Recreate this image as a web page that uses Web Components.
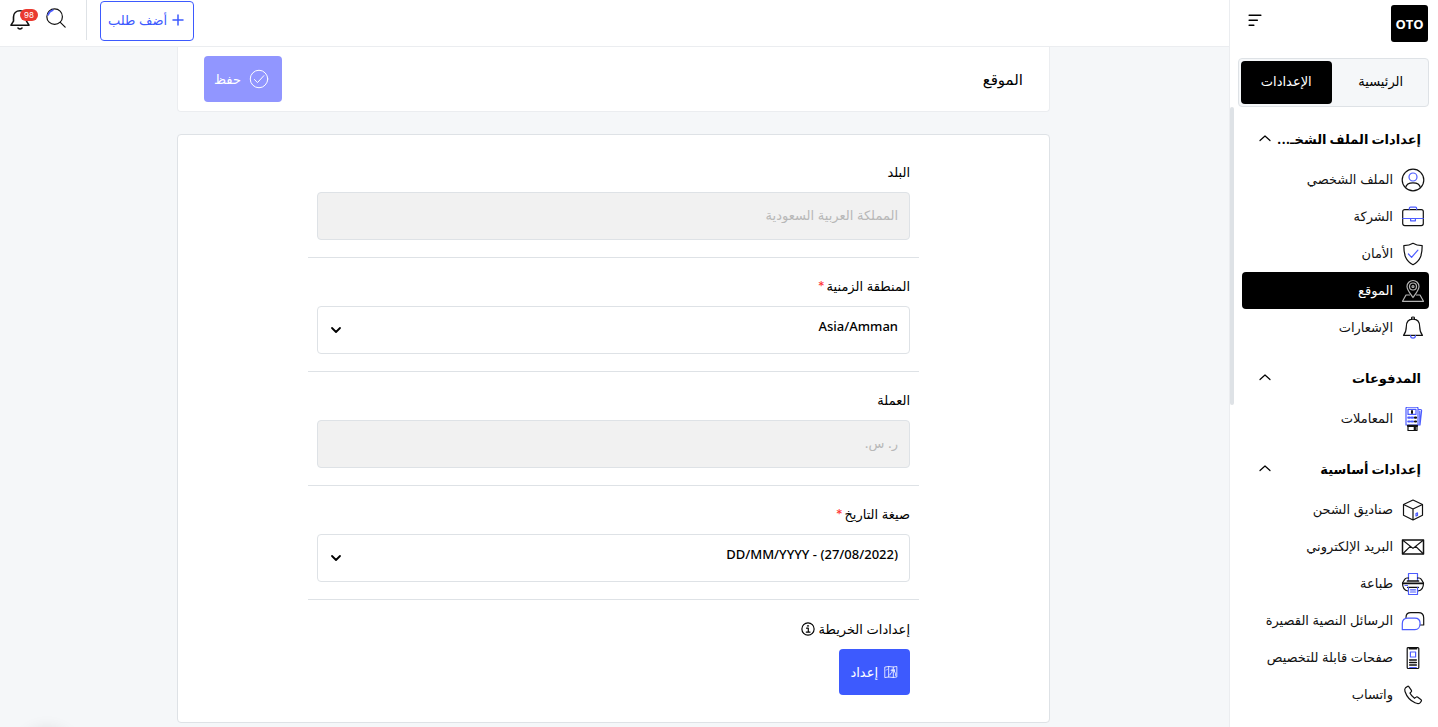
<!DOCTYPE html>
<html lang="ar" dir="rtl">
<head>
<meta charset="utf-8">
<meta name="viewport" content="width=device-width, initial-scale=1">
<title>الموقع</title>
<style>
    body {
        margin: 0;
        background: #f5f7f9;
        color: #000;
        font-family: Inter, "Noto Sans", "DejaVu Sans", sans-serif;
        font-size: 13px;
        --blue: #3d5afe;
        --line: #dee2e6;
    }
</style>
</head>
<body>
<app-shell>
    <side-bar slot="sidebar">
        <nav-group heading="إعدادات الملف الشخـ...">
            <nav-item icon="user">الملف الشخصي</nav-item>
            <nav-item icon="briefcase">الشركة</nav-item>
            <nav-item icon="shield">الأمان</nav-item>
            <nav-item icon="location" active>الموقع</nav-item>
            <nav-item icon="bell">الإشعارات</nav-item>
        </nav-group>
        <nav-group heading="المدفوعات">
            <nav-item icon="terminal">المعاملات</nav-item>
        </nav-group>
        <nav-group heading="إعدادات أساسية">
            <nav-item icon="box">صناديق الشحن</nav-item>
            <nav-item icon="mail">البريد الإلكتروني</nav-item>
            <nav-item icon="printer">طباعة</nav-item>
            <nav-item icon="chat">الرسائل النصية القصيرة</nav-item>
            <nav-item icon="phone">صفحات قابلة للتخصيص</nav-item>
            <nav-item icon="call">واتساب</nav-item>
        </nav-group>
    </side-bar>
    <top-bar slot="topbar" count="98"></top-bar>
    <page-title>الموقع</page-title>
    <settings-panel>
        <form-field value="المملكة العربية السعودية" disabled>البلد</form-field>
        <form-field type="select" value="Asia/Amman" required>المنطقة الزمنية</form-field>
        <form-field value="ر. س." disabled>العملة</form-field>
        <form-field type="select" value="DD/MM/YYYY - (27/08/2022)" required>صيغة التاريخ</form-field>
        <map-settings>إعدادات الخريطة</map-settings>
    </settings-panel>
</app-shell>
<chat-shadow></chat-shadow>

<script>
const ICONS = {
    user: `<circle cx="12" cy="12" r="10.8"/><circle class="b" cx="12" cy="9" r="4"/><path d="M4.6 19.7c.6-3.200 3.400-4.900 7.400-4.900s6.800 1.700 7.400 4.900"/>`,
    briefcase: `<rect x="1.700" y="4.600" width="20.600" height="16" rx="2"/><path class="b" d="M8.300 4.600V3.400q0-1.200 1.200-1.200h5q1.200 0 1.200 1.200v1.200M1.700 13.500h20.600M9.600 13.500v2.300h4.800v-2.300"/>`,
    shield: `<path d="M12 1.300c2.700 1.800 5.700 2.300 9.200 2.300 0 8.900-1.500 14.900-9.200 19.100C4.300 18.500 2.800 12.500 2.800 3.600c3.500 0 6.500-.5 9.200-2.300z"/><path class="b" d="M7.400 12l3.200 3.300 6.300-7.200"/>`,
    location: `<path d="M12 18.500C8.400 13.500 6 10.800 6 7.500a6 6 0 0 1 12 0c0 3.300-2.400 6-6 11z"/><circle cx="12" cy="7.500" r="3.500"/><circle cx="12" cy="7.500" r="1"/><path d="M8.500 16H5l-3.500 6.300h21L19 16h-3.500"/>`,
    bell: `<path d="M10.600 3.200V1.800q0-.8 1.400-.8t1.400.8v1.400M2.500 19.300h19c-2-2.400-2.800-4-2.800-8.500C18.700 6.300 16.400 3.200 12 3.200s-6.700 3.100-6.700 7.600c0 4.500-.8 6.100-2.800 8.500z"/><path class="b" d="M9.500 19.500c.2 3.500 4.800 3.500 5 0"/>`,
    terminal: `<g class="b"><path d="M5 18V1.500q0-1.300 1.300-1.300h9.400q1.300 0 1.300 1.300V18zM17 2.500h2.300q1.400 0 1.300 1.300L19 18h-2M18.800 4v13"/><rect x="7" y="2.400" width="8" height="5"/><path d="M7.300 10.700h1.500M10.500 10.700H12M7.300 14.500h1.500M10.500 14.500H12" stroke-width="2.200"/></g><path d="M11 4v2" stroke-width="2"/><path d="M14 10.700h1M14 14.500h1" stroke-width="2.200"/><path d="M7 18.500v5h9v-5z"/><path d="M7 18.800h9M13.800 19v4.500" stroke-width="2.200"/>`,
    box: `<path d="M12 2l9.500 4.500v10.800L12 22l-9.500-4.700V6.500zM2.500 6.500L12 11l9.500-4.500M12 11v11"/><path class="b" d="M15 15.500v2.500l1.500-.6v-2.500z"/>`,
    mail: `<rect x="1.500" y="5" width="21" height="14" stroke-width="1.500"/><path d="M1.800 5.300l10.200 8.100L22.200 5.300M1.800 18.700l7.500-7.300M22.200 18.700l-7.500-7.300"/>`,
    printer: `<path class="b" d="M7.500 8.500V1.500h9v7"/><path d="M7.500 6H6q-1.500 0-2.300 1.400L1.500 11c0 3.500 1.500 7.500 5.500 8M16.500 6H18q1.500 0 2.300 1.400l2.200 3.600c0 3.500-1.500 7.500-5.500 8"/><path d="M6.500 9h11M1.800 11.300h20.400" stroke-width="1.700"/><path d="M6.500 15.300h11"/><path class="b" d="M4 13.500h2.500M7.500 15.500v7h9v-7M9.500 17.800h5M9.500 20h5"/>`,
    chat: `<path d="M5 8.500C5 5.600 6.800 3.700 9.800 3.700h7.700c3.400 0 5.200 2.200 5.200 5.300V16h-3.500"/><path class="b" d="M1.300 20.700v-6c0-3.500 2.300-5.500 5.600-5.500h7c3.200 0 5.200 2.200 5.200 5.300 0 3.500-2 6.200-5.200 6.200z"/>`,
    phone: `<rect x="6.200" y="1.500" width="11.600" height="21" rx="1"/><path d="M8.500 2.500h7" stroke-width="2"/><rect class="b" x="9.400" y="6" width="5.200" height="5"/><path d="M8.700 14h6.600M8.700 16.500h6.600M8.700 19h6.600" stroke-width="1.500"/><path class="b" d="M8.700 21.500h6.600"/>`,
    call: `<path d="M4.600 4.700l1.800-1.300q.8-.5 1.400.2l2.600 3.700q.5.900-.2 1.500L8.900 10.100c1 2 2.600 3.700 4.600 5.200l1.500-1.200q.7-.6 1.500 0l3.600 2.700q.8.700.1 1.500l-1.200 1.500c-1.200 1.200-3 .9-5 0C8.900 17.500 5.600 13.200 4 8.500c-.5-1.500-.4-2.800.6-3.800z"/>`,
    search: `<circle cx="10.500" cy="10.500" r="8.500"/><path d="M16.700 16.700l5.300 5.300"/><path class="b" d="M3.500 8.500C4.300 6 6 4.300 8.500 3.500" stroke-width="1.800"/>`,
    alarm: `<path d="M3 18.200h18l-2.500-4V10c0-3.600-2.600-6.300-6.500-6.300S5.500 6.400 5.500 10v4.200z"/><path d="M10 21q2 2 4 0"/>`,
    check: `<circle cx="12" cy="12" r="10.500"/><path d="M6.500 12.600l3.700 3.700L17.800 8"/>`,
    plus: `<path d="M12 2v20M2 12h20"/>`,
    up: `<path d="M2 15l10-9 10 9"/>`,
    down: `<path d="M4 8l8 8 8-8"/>`,
    menu: `<path d="M2 4h20M2 12.500h14M2 21h8"/>`,
    info: `<circle cx="12" cy="12" r="10.500"/><path d="M9.500 10.500h3v6.500M9 17.300h6.500"/><path d="M11 6.700h2" />`,
    map: `<path d="M2 3.500l6-1 8 1 6-1v18l-6 1-8-1-6 1zM8 2.500v18M16 3.500v18M4 9l2-2M10 17c0-4 4-2 4-6V7M12 9h4M18 8v4l2 2v4"/>`
};

class UiIcon extends HTMLElement {
    connectedCallback() {
        const weight = this.getAttribute('weight') || '1.2';
        this.attachShadow({ mode: 'open' });
        this.shadowRoot.innerHTML = `
            <style>
                :host {
                    display: inline-flex;
                    flex: none;
                    width: var(--icon-size, 24px);
                    height: var(--icon-size, 24px);
                }
                svg {
                    width: 100%;
                    height: 100%;
                    fill: none;
                    stroke: currentColor;
                    stroke-width: ${weight};
                    stroke-linecap: round;
                    stroke-linejoin: round;
                }
                .b {
                    stroke: var(--icon-accent, #4c5cff);
                }
            </style>
            <svg viewBox="0 0 24 24" aria-hidden="true">${ICONS[this.getAttribute('name')]}</svg>
        `;
    }
}

class AppShell extends HTMLElement {
    connectedCallback() {
        this.attachShadow({ mode: 'open' });
        this.shadowRoot.innerHTML = `
            <style>
                :host {
                    display: flex;
                    min-height: 100vh;
                }
                .page {
                    flex: 1;
                    min-width: 0;
                }
                main {
                    display: flex;
                    flex-direction: column;
                    gap: 22px;
                    padding: 0 179px 4px 177px;
                }
            </style>
            <slot name="sidebar"></slot>
            <div class="page">
                <slot name="topbar"></slot>
                <main><slot></slot></main>
            </div>
        `;
    }
}

class SideBar extends HTMLElement {
    connectedCallback() {
        this.attachShadow({ mode: 'open' });
        this.shadowRoot.innerHTML = `
            <style>
                :host {
                    display: flex;
                    flex-direction: column;
                    flex: none;
                    width: 208px;
                    height: 100vh;
                    background: #fff;
                    border-left: 1px solid #ebedf0;
                }
                header {
                    display: flex;
                    justify-content: space-between;
                    padding: 5px 10px 0 18px;
                }
                .logo {
                    display: grid;
                    place-items: center;
                    width: 37px;
                    height: 37px;
                    border-radius: 3px;
                    background: #000;
                    color: #fff;
                    font: 700 13px "Open Sans", sans-serif;
                    text-decoration: none;
                }
                .toggle {
                    --icon-size: 14px;
                    align-self: flex-start;
                    display: flex;
                    padding: 8px 0;
                    border: 0;
                    background: none;
                    color: #000;
                }
                .tabs {
                    display: flex;
                    gap: 4px;
                    margin: 16px 9px 0 8px;
                    padding: 2px;
                    border: 1px solid var(--line);
                    border-radius: 4px;
                    background: #f5f7f9;
                }
                .tabs button {
                    flex: 1;
                    height: 43px;
                    padding: 0 0 4px;
                    border: 0;
                    border-radius: 4px;
                    background: none;
                    color: #000;
                    font: inherit;
                }
                .tabs .active {
                    background: #000;
                    color: #fff;
                }
                .scroll {
                    display: flex;
                    flex: 1;
                    min-height: 0;
                }
                nav {
                    flex: 1;
                    min-width: 0;
                    padding: 0 9px 0 8px;
                }
                .thumb {
                    width: 4px;
                    height: 48%;
                    border-radius: 2px;
                    background: var(--line);
                }
            </style>
            <header>
                <a class="logo" href="#">OTO</a>
                <button class="toggle" aria-label="القائمة"><ui-icon name="menu" weight="2.6"></ui-icon></button>
            </header>
            <div class="tabs">
                <button>الرئيسية</button>
                <button class="active">الإعدادات</button>
            </div>
            <div class="scroll">
                <nav><slot></slot></nav>
                <div class="thumb"></div>
            </div>
        `;
    }
}

class NavGroup extends HTMLElement {
    connectedCallback() {
        this.attachShadow({ mode: 'open' });
        this.shadowRoot.innerHTML = `
            <style>
                :host {
                    display: block;
                }
                button {
                    --icon-size: 12px;
                    display: flex;
                    align-items: center;
                    justify-content: space-between;
                    gap: 4px;
                    width: 100%;
                    height: 54px;
                    padding: 9px 8px 0 17px;
                    border: 0;
                    background: none;
                    color: #000;
                    font: inherit;
                    font-weight: 700;
                }
                span {
                    white-space: nowrap;
                    line-height: 24px;
                }
            </style>
            <button aria-expanded="true">
                <span>${this.getAttribute('heading')}</span>
                <ui-icon name="up" weight="2.4"></ui-icon>
            </button>
            <div class="items"><slot></slot></div>
        `;

        const button = this.shadowRoot.querySelector('button');
        const items = this.shadowRoot.querySelector('.items');
        button.addEventListener('click', () => {
            items.hidden = !items.hidden;
            button.setAttribute('aria-expanded', String(!items.hidden));
        });
    }
}

class NavItem extends HTMLElement {
    connectedCallback() {
        this.attachShadow({ mode: 'open' });
        this.shadowRoot.innerHTML = `
            <style>
                :host {
                    display: block;
                }
                a {
                    display: flex;
                    align-items: center;
                    gap: 8px;
                    height: 37px;
                    padding: 0 4px;
                    border-radius: 4px;
                    color: #111;
                    white-space: nowrap;
                    text-decoration: none;
                }
                span {
                    padding-bottom: 2px;
                }
                :host([active]) a {
                    --icon-accent: #b5b5b5;
                    background: #000;
                    color: #fff;
                }
                :host([active]) ui-icon {
                    color: #b5b5b5;
                }
            </style>
            <a href="#"><ui-icon name="${this.getAttribute('icon')}"></ui-icon><span><slot></slot></span></a>
        `;
    }
}

class TopBar extends HTMLElement {
    connectedCallback() {
        this.attachShadow({ mode: 'open' });
        this.shadowRoot.innerHTML = `
            <style>
                :host {
                    display: flex;
                    justify-content: flex-end;
                    height: 46px;
                    background: #fff;
                    border-bottom: 1px solid #ebedf0;
                }
                button {
                    display: flex;
                    padding: 0;
                    border: 0;
                    background: none;
                    color: #111;
                    font: inherit;
                }
                .add {
                    --icon-size: 12px;
                    align-items: center;
                    gap: 5px;
                    height: 40px;
                    margin-top: 1px;
                    padding: 0 9px 2px 7px;
                    border: 1px solid var(--blue);
                    border-radius: 4px;
                    color: var(--blue);
                }
                .line {
                    width: 1px;
                    height: 40px;
                    margin: 0 13px 0 19px;
                    background: var(--line);
                }
                .search {
                    --icon-size: 22px;
                    padding: 7px 0 0;
                }
                .alarm {
                    position: relative;
                    padding: 7px 0 0;
                    margin: 0 13px 0 8px;
                }
                .badge {
                    position: absolute;
                    top: 9px;
                    left: 12px;
                    width: 18px;
                    border-radius: 6px;
                    background: #ea3a30;
                    color: #fff;
                    font-size: 8px;
                    line-height: 12px;
                }
            </style>
            <button class="add"><ui-icon name="plus" weight="3"></ui-icon>أضف طلب</button>
            <div class="line"></div>
            <button class="search" aria-label="بحث"><ui-icon name="search" weight="1.3"></ui-icon></button>
            <button class="alarm" aria-label="الإشعارات">
                <ui-icon name="alarm" weight="1.6"></ui-icon>
                <span class="badge">${this.getAttribute('count')}</span>
            </button>
        `;
    }
}

class PageTitle extends HTMLElement {
    connectedCallback() {
        this.attachShadow({ mode: 'open' });
        this.shadowRoot.innerHTML = `
            <style>
                :host {
                    display: flex;
                    align-items: center;
                    justify-content: space-between;
                    padding: 9px 26px;
                    border: 1px solid #ebedf0;
                    border-top: 0;
                    border-radius: 0 0 4px 4px;
                    background: #fff;
                }
                h1 {
                    margin: 0;
                    font-size: 15px;
                    font-weight: 400;
                }
                button {
                    --icon-size: 20px;
                    display: flex;
                    align-items: center;
                    gap: 8px;
                    height: 46px;
                    padding: 0 13px 0 10px;
                    border: 0;
                    border-radius: 4px;
                    background: #9196ff;
                    color: #fff;
                    font: inherit;
                }
            </style>
            <h1><slot></slot></h1>
            <button disabled><ui-icon name="check"></ui-icon>حفظ</button>
        `;
    }
}

class SettingsPanel extends HTMLElement {
    connectedCallback() {
        this.attachShadow({ mode: 'open' });
        this.shadowRoot.innerHTML = `
            <style>
                :host {
                    display: block;
                    padding: 9px 130px 27px;
                    border: 1px solid var(--line);
                    border-radius: 4px;
                    background: #fff;
                }
            </style>
            <slot></slot>
        `;
    }
}

class FormField extends HTMLElement {
    connectedCallback() {
        const value = this.getAttribute('value');
        const disabled = this.hasAttribute('disabled') ? 'disabled' : '';
        const control = this.getAttribute('type') === 'select'
            ? `<select id="control"><option>${value}</option></select><ui-icon name="down" weight="3.6"></ui-icon>`
            : `<input id="control" type="text" value="${value}" ${disabled}>`;

        this.attachShadow({ mode: 'open' });
        this.shadowRoot.innerHTML = `
            <style>
                :host {
                    display: block;
                    padding: 18px 9px 17px;
                    border-bottom: 1px solid var(--line);
                }
                label {
                    display: block;
                    height: 20px;
                    margin-bottom: 10px;
                    line-height: 20px;
                }
                .star {
                    margin-right: 2px;
                    color: #f33;
                }
                .control {
                    --icon-size: 12px;
                    display: grid;
                    align-items: center;
                }
                input, select, ui-icon {
                    grid-area: 1 / 1;
                }
                input, select {
                    box-sizing: border-box;
                    width: 100%;
                    height: 48px;
                    margin: 0;
                    padding: 0 11px 2px;
                    border: 1px solid var(--line);
                    border-radius: 4px;
                    background: #fff;
                    color: #000;
                    font: inherit;
                    appearance: none;
                }
                select {
                    padding-bottom: 8px;
                    font-family: "Noto Sans", sans-serif;
                    font-weight: 500;
                    direction: ltr;
                    text-align: right;
                    text-align-last: right;
                }
                input:disabled {
                    background: #f1f1f1;
                    color: #b8b8b8;
                }
                ui-icon {
                    justify-self: end;
                    margin-left: 13px;
                    pointer-events: none;
                }
            </style>
            <label for="control"><slot></slot>${this.hasAttribute('required') ? '<span class="star">*</span>' : ''}</label>
            <div class="control">${control}</div>
        `;
    }
}

class MapSettings extends HTMLElement {
    connectedCallback() {
        this.attachShadow({ mode: 'open' });
        this.shadowRoot.innerHTML = `
            <style>
                :host {
                    --icon-size: 14px;
                    display: block;
                    padding: 19px 9px 0;
                }
                .title {
                    display: flex;
                    align-items: center;
                    gap: 4px;
                    height: 20px;
                    margin-bottom: 10px;
                    line-height: 20px;
                }
                button {
                    display: flex;
                    align-items: center;
                    gap: 6px;
                    height: 46px;
                    padding: 0 12px 0 11px;
                    border: 0;
                    border-radius: 4px;
                    background: var(--blue);
                    color: #fff;
                    font: inherit;
                }
            </style>
            <div class="title"><slot></slot><ui-icon name="info" weight="2"></ui-icon></div>
            <button><ui-icon name="map" weight="1.4"></ui-icon>إعداد</button>
        `;
    }
}

// soft shadow of the chat launcher that sits below the fold
class ChatShadow extends HTMLElement {
    connectedCallback() {
        this.attachShadow({ mode: 'open' });
        this.shadowRoot.innerHTML = `
            <style>
                :host {
                    position: fixed;
                    left: 20px;
                    bottom: -56px;
                    width: 54px;
                    height: 54px;
                    border-radius: 50%;
                    box-shadow: 0 0 16px rgba(0, 0, 0, 0.1);
                }
            </style>
        `;
    }
}

customElements.define('ui-icon', UiIcon);
customElements.define('app-shell', AppShell);
customElements.define('side-bar', SideBar);
customElements.define('nav-group', NavGroup);
customElements.define('nav-item', NavItem);
customElements.define('top-bar', TopBar);
customElements.define('page-title', PageTitle);
customElements.define('settings-panel', SettingsPanel);
customElements.define('form-field', FormField);
customElements.define('map-settings', MapSettings);
customElements.define('chat-shadow', ChatShadow);
</script>
</body>
</html>
